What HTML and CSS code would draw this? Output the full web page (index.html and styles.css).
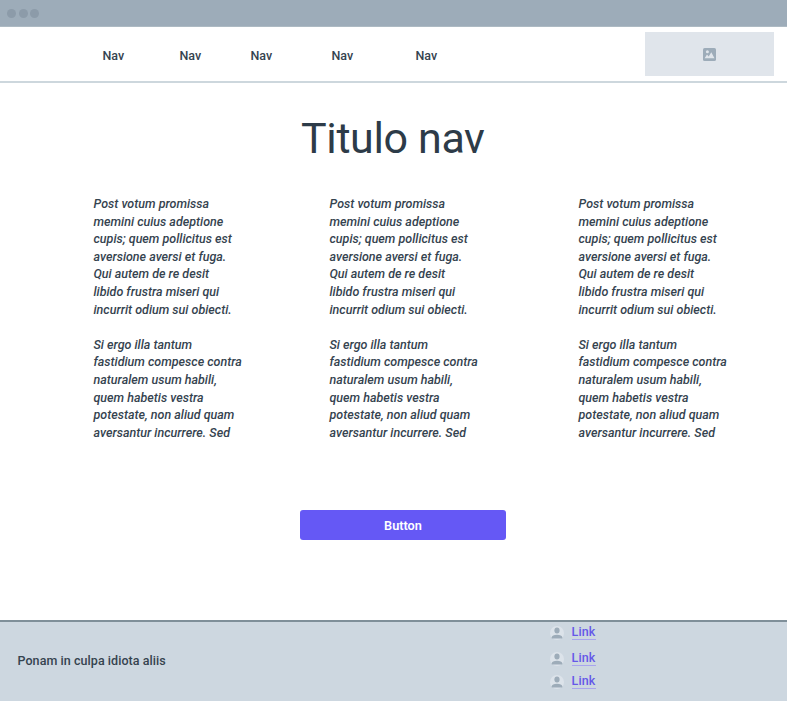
FILE: index.html
```html
<!DOCTYPE html>
<html lang="es">
<head>
<meta charset="utf-8">
<title>Titulo nav</title>
<link rel="stylesheet" href="styles.css">
</head>
<body>
<div class="titlebar"><i class="dot"></i><i class="dot"></i><i class="dot"></i></div>
<header class="header">
  <nav class="nav"><a>Nav</a><a>Nav</a><a>Nav</a><a>Nav</a><a>Nav</a></nav>
  <div class="image">
    <svg width="13" height="13" viewBox="0 0 13 13"><rect width="13" height="13" rx="1.6" fill="#9dacb9"/><circle cx="4.4" cy="3.7" r="1.5" fill="#e0e5eb"/><path d="M1.600 10.200L4 6.400l1.700 2L8.300 4.300l3.200 5.900z" fill="#e0e5eb"/></svg>
  </div>
</header>
<main class="main">
  <h1 class="title">Titulo nav</h1>
  <div class="columns">
    <p class="copy">Post votum promissa<br>memini cuius adeptione<br>cupis; quem pollicitus est<br>aversione aversi et fuga.<br>Qui autem de re desit<br>libido frustra miseri qui<br>incurrit odium sui obiecti.<br><br>Si ergo illa tantum<br>fastidium compesce contra<br>naturalem usum habili,<br>quem habetis vestra<br>potestate, non aliud quam<br>aversantur incurrere. Sed</p>
    <p class="copy">Post votum promissa<br>memini cuius adeptione<br>cupis; quem pollicitus est<br>aversione aversi et fuga.<br>Qui autem de re desit<br>libido frustra miseri qui<br>incurrit odium sui obiecti.<br><br>Si ergo illa tantum<br>fastidium compesce contra<br>naturalem usum habili,<br>quem habetis vestra<br>potestate, non aliud quam<br>aversantur incurrere. Sed</p>
    <p class="copy">Post votum promissa<br>memini cuius adeptione<br>cupis; quem pollicitus est<br>aversione aversi et fuga.<br>Qui autem de re desit<br>libido frustra miseri qui<br>incurrit odium sui obiecti.<br><br>Si ergo illa tantum<br>fastidium compesce contra<br>naturalem usum habili,<br>quem habetis vestra<br>potestate, non aliud quam<br>aversantur incurrere. Sed</p>
  </div>
  <button class="button">Button</button>
</main>
<footer class="footer">
  <span class="note">Ponam in culpa idiota aliis</span>
  <div class="links">
    <div class="row"><svg class="user" viewBox="0 0 14 14"><circle cx="7" cy="7" r="7" fill="#dce3ea"/><ellipse cx="7" cy="4.600" rx="2.600" ry="3" fill="#9dacb9"/><path d="M1.700 12.600v-1.200C1.700 9.700 4 8.800 7 8.800s5.300.9 5.300 2.600v1.200z" fill="#9dacb9"/></svg><a class="link">Link</a></div>
    <div class="row"><svg class="user" viewBox="0 0 14 14"><circle cx="7" cy="7" r="7" fill="#dce3ea"/><ellipse cx="7" cy="4.600" rx="2.600" ry="3" fill="#9dacb9"/><path d="M1.700 12.600v-1.200C1.700 9.700 4 8.800 7 8.800s5.300.9 5.300 2.600v1.200z" fill="#9dacb9"/></svg><a class="link">Link</a></div>
    <div class="row"><svg class="user" viewBox="0 0 14 14"><circle cx="7" cy="7" r="7" fill="#dce3ea"/><ellipse cx="7" cy="4.600" rx="2.600" ry="3" fill="#9dacb9"/><path d="M1.700 12.600v-1.200C1.700 9.700 4 8.800 7 8.800s5.300.9 5.300 2.600v1.200z" fill="#9dacb9"/></svg><a class="link">Link</a></div>
  </div>
</footer>
</body>
</html>
```
FILE: styles.css
```css
* { box-sizing: border-box; }
body { margin: 0; height: 702px; overflow: hidden; background: #fff; color: #35434f; font: 500 12.5px/18px Roboto, "Liberation Sans", sans-serif; }
.titlebar { height: 27px; background: #9dacb9; display: flex; gap: 2.6px; padding: 9px 0 0 7px; border-bottom: 1px solid #adbac3; }
.dot { width: 9px; height: 9px; border-radius: 50%; background: #8c9ba9; }
.header { height: 56px; border-bottom: 2px solid #cdd7dd; display: flex; justify-content: space-between; padding: 5px 13px 0 102.5px; }
.nav { display: grid; grid-template-columns: 77px 71px 81px 84px 60px; padding-top: 15px; }
.image { width: 129px; height: 44px; background: #e0e5eb; display: grid; place-items: center; }
.main { height: 538px; }
.title { margin: 0; padding: 29px 0 0 301px; color: #2d3b48; font-size: 43px; font-weight: 400; line-height: 52px; letter-spacing: -.36px; white-space: nowrap; }
.columns { display: grid; grid-template-columns: 236px 249px 200px; padding: 31px 0 0 93.5px; }
.copy { margin: 0; font-style: italic; line-height: 17.6px; white-space: nowrap; }
.button { display: block; width: 206px; height: 30px; margin: 69px 0 0 300px; padding: 1px 0 0; border: 0; border-radius: 3px; background: #6558f5; color: #fff; font: 600 12.7px/29px Roboto, "Liberation Sans", sans-serif; }
.footer { height: 81px; margin-top: -1px; background: #cdd7e0; border-top: 2px solid #7f8f99; display: flex; }
.note { width: 550px; padding: 30px 0 0 17.5px; letter-spacing: .06px; }
.row { display: flex; align-items: flex-start; gap: 7.5px; height: 19px; margin-bottom: 7px; }
.row + .row { margin-bottom: 4px; }
.user { width: 14px; height: 14px; margin-top: 4px; }
.link { height: 18px; line-height: 19px; letter-spacing: .15px; color: #6558e8; border-bottom: 1px solid #a9a5ed; }
```
